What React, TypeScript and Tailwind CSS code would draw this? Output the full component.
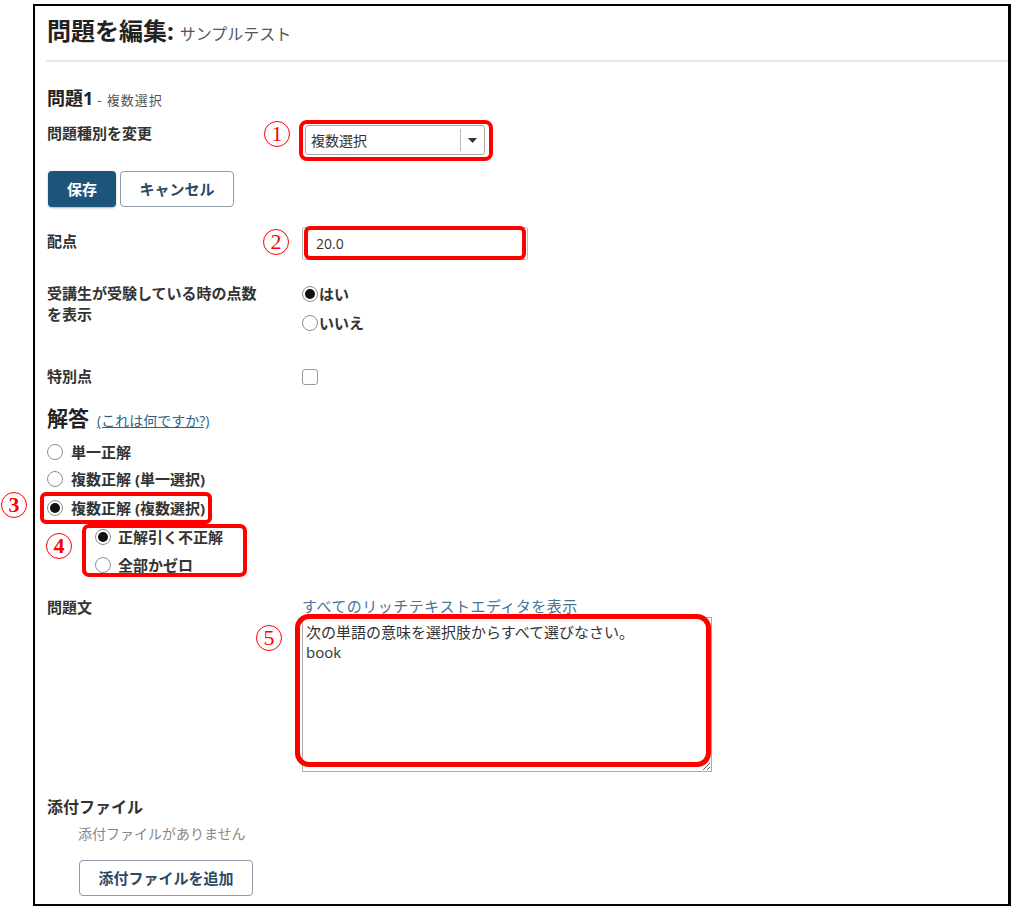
import React from "react";

function Num({ n, className }: { n: string; className: string }) {
  return (
    <span
      className={
        "absolute flex h-[26px] w-[26px] items-center justify-center rounded-full border-[1.5px] border-[#ff0000] font-['Liberation_Serif',serif] text-[22px] leading-none text-[#ff0000] " +
        className
      }
    >
      {n}
    </span>
  );
}

function Radio({ checked }: { checked?: boolean }) {
  return (
    <span className="flex h-[16px] w-[16px] shrink-0 items-center justify-center rounded-full border border-[#8f8f8f] bg-white">
      {checked && <span className="h-[10px] w-[10px] rounded-full bg-[#111]" />}
    </span>
  );
}

function RedBox({ className }: { className: string }) {
  return <div className={"pointer-events-none absolute border-[#ff0000] " + className} />;
}

export default function App() {
  return (
    <div className="h-[909px] w-[1022px] bg-white pl-[33px] pt-[4px] font-['Open_Sans','Noto_Sans_CJK_JP',sans-serif] text-[#333]">
      <div className="h-[902px] w-[978px] border-2 border-r-[3px] border-black">
        {/* header */}
        <div className="ml-[11px] border-b-2 border-[#e9e9e9] pb-[14px] pl-[1px] pt-[13px]">
          <h1 className="flex items-baseline text-[24px] font-bold leading-[24px] text-[#222]">
            問題を編集:
            <span className="ml-[6px] text-[16px] font-normal text-[#555]">サンプルテスト</span>
          </h1>
        </div>

        <div className="pl-[12px]">
          {/* question title */}
          <div className="mt-[24px] flex h-[24px] items-baseline text-[18px] font-bold leading-[24px] text-[#222]">
            問題1
            <span className="ml-[4px] text-[13px] font-normal tracking-[1px] text-[#555]">- 複数選択</span>
          </div>

          {/* type */}
          <div className="mt-[13px] flex">
            <div className="w-[255px] text-[15px] font-bold leading-[20px]">問題種別を変更</div>
            <div className="relative ml-[3px] mt-[2px]">
              <div className="flex h-[30px] w-[180px] items-center rounded-[3px] border border-[#aaa] bg-white">
                <span className="pl-[5px] text-[14px]">複数選択</span>
                <span className="ml-auto flex h-[22px] w-[24px] items-center justify-center border-l border-[#bbb]">
                  <svg width="9" height="5" viewBox="0 0 9 5">
                    <polygon points="0,0 9,0 4.5,5" fill="#333" />
                  </svg>
                </span>
              </div>
              <RedBox className="-left-[6px] -top-[5px] h-[41px] w-[194px] rounded-[8px] border-[4px]" />
              <Num n="1" className="-left-[41px] -top-[4px]" />
            </div>
          </div>

          {/* buttons */}
          <div className="ml-[1px] mt-[16px] flex gap-[4px]">
            <button className="h-[36px] w-[68px] rounded-[4px] bg-[#1d5479] text-[15px] font-bold text-white shadow-[0_1px_2px_rgba(0,0,0,0.3)]">
              保存
            </button>
            <button className="h-[36px] w-[114px] rounded-[4px] border border-[#8d9ba8] bg-white text-[15px] font-bold text-[#2a4a66]">
              キャンセル
            </button>
          </div>

          {/* points */}
          <div className="mt-[20px] flex">
            <div className="mt-[4px] w-[255px] text-[15px] font-bold leading-[20px]">配点</div>
            <div className="relative">
              <div className="flex h-[33px] w-[226px] items-center rounded-[2px] border border-[#bbb] bg-white pl-[13px] text-[14px]">
                20.0
              </div>
              <RedBox className="-top-[1px] left-[2px] h-[34px] w-[222px] rounded-[6px] border-[4px]" />
              <Num n="2" className="-left-[39px] top-[2px]" />
            </div>
          </div>

          {/* show score */}
          <div className="mt-[23px] flex">
            <div className="w-[255px] pr-[35px] text-[15px] font-bold leading-[21px]">
              受講生が受験している時の点数を表示
            </div>
            <div className="flex flex-col gap-[7px] text-[15px] font-bold">
              <label className="flex h-[22px] items-center">
                <Radio checked />
                <span className="ml-[1px]">はい</span>
              </label>
              <label className="flex h-[22px] items-center">
                <Radio />
                <span className="ml-[1px]">いいえ</span>
              </label>
            </div>
          </div>

          {/* extra */}
          <div className="mt-[32px] flex">
            <div className="w-[255px] text-[15px] font-bold leading-[20px]">特別点</div>
            <span className="mt-[3px] h-[16px] w-[16px] rounded-[3px] border border-[#999] bg-white" />
          </div>

          {/* answers */}
          <div className="mt-[19px] flex h-[26px] items-baseline leading-[26px]">
            <span className="text-[21px] font-bold text-[#222]">解答</span>
            <a className="ml-[8px] text-[14px] text-[#2f6384] underline">(これは何ですか?)</a>
          </div>

          <div className="mt-[10px] flex flex-col text-[15px] font-bold">
            <label className="flex h-[22px] items-center gap-[8px]">
              <Radio />
              単一正解
            </label>
            <label className="mt-[5px] flex h-[22px] items-center gap-[8px]">
              <Radio />
              複数正解 (単一選択)
            </label>
            <div className="relative mt-[7px]">
              <label className="flex h-[22px] items-center gap-[8px]">
                <Radio checked />
                複数正解 (複数選択)
              </label>
              <RedBox className="-left-[7px] -top-[5px] h-[32px] w-[172px] rounded-[6px] border-[4px]" />
              <Num n="3" className="-left-[46px] -top-[5px]" />
            </div>
            <div className="relative ml-[48px]">
              <label className="mt-[7px] flex h-[22px] items-center gap-[7px]">
                <Radio checked />
                正解引く不正解
              </label>
              <label className="mt-[6px] flex h-[22px] items-center gap-[7px]">
                <Radio />
                全部かゼロ
              </label>
              <RedBox className="-left-[13px] top-[5px] h-[53px] w-[165px] rounded-[7px] border-[4px]" />
              <Num n="4" className="-left-[49px] top-[14px]" />
            </div>
          </div>

          {/* question text */}
          <div className="mt-[20px] flex">
            <div className="mt-[1px] w-[255px] text-[15px] font-bold leading-[20px]">問題文</div>
            <div className="relative">
              <a className="block h-[20px] text-[15px] leading-[20px] tracking-[0.5px] text-[#4a7394]">
                すべてのリッチテキストエディタを表示
              </a>
              <textarea
                readOnly
                className="mt-[1px] block h-[155px] w-[410px] border border-[#aaa] bg-white pl-[3px] pt-[4px] text-[15px] leading-[20px] text-[#333] outline-none"
                defaultValue={"次の単語の意味を選択肢からすべて選びなさい。\nbook"}
              />
              <RedBox className="-left-[7px] top-[18px] h-[153px] w-[416px] rounded-[14px] border-[5px]" />
              <Num n="5" className="-left-[46px] top-[29px]" />
            </div>
          </div>

          {/* attachments */}
          <div className="mt-[25px] text-[16px] font-bold leading-[20px]">添付ファイル</div>
          <div className="ml-[31px] mt-[7px] text-[14px] leading-[20px] text-[#888]">添付ファイルがありません</div>
          <button className="ml-[32px] mt-[16px] h-[36px] w-[174px] rounded-[4px] border border-[#8d9ba8] bg-white text-[15px] font-bold text-[#2a4a66]">
            添付ファイルを追加
          </button>
        </div>
      </div>
    </div>
  );
}
